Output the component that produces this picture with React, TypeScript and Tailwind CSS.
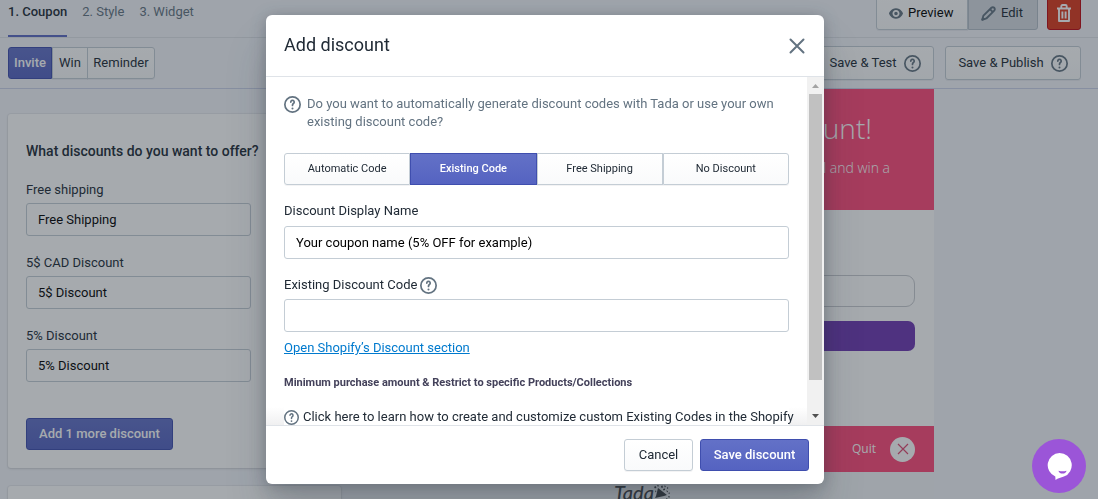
import React from "react";

function HelpIcon({ className = "size-[17px]" }: { className?: string }) {
  return (
    <svg viewBox="0 0 20 20" fill="none" stroke="currentColor" className={`shrink-0 text-[#637381] ${className}`} aria-hidden="true">
      <circle cx="10" cy="10" r="9" strokeWidth="2" />
      <path d="M8 7.1a2 2 0 1 1 3.1 1.7C10.400 9.300 10 9.700 10 10.500v.7" strokeWidth="2" strokeLinecap="round" />
      <circle cx="10" cy="14.700" r="1.200" fill="currentColor" stroke="none" />
    </svg>
  );
}

function EyeIcon() {
  return (
    <svg viewBox="2 4 16 12" className="h-[11px] w-[14px] text-[#637381]" fill="currentColor" aria-hidden="true">
      <path d="M17.928 9.628c-.092-.229-2.317-5.628-7.929-5.628s-7.837 5.399-7.929 5.628c-.094.239-.094.505 0 .744.092.229 2.317 5.628 7.929 5.628s7.837-5.399 7.929-5.628c.094-.239.094-.505 0-.744m-7.929 4.372c-2.209 0-4-1.791-4-4s1.791-4 4-4c2.210 0 4 1.791 4 4s-1.790 4-4 4m0-6c-1.104 0-2 .896-2 2s.896 2 2 2c1.105 0 2-.896 2-2s-.895-2-2-2" />
    </svg>
  );
}

function PencilIcon() {
  return (
    <svg viewBox="0 0 16 16" className="size-[15px] text-[#637381]" fill="none" stroke="currentColor" strokeWidth="2" strokeLinejoin="round" aria-hidden="true">
      <path d="M1.300 14.700l1.300-4.500 8.500-8.300a2 2 0 0 1 3 3l-8.400 8.400z" />
      <path d="M9.800 3.600l2.600 2.600" />
      <path d="M1 15l.8-3 2.200 2.200z" fill="currentColor" strokeWidth="1" />
    </svg>
  );
}

function TrashIcon() {
  return (
    <svg viewBox="0 0 14 18" className="h-[18px] w-[14px]" fill="none" stroke="currentColor" strokeWidth="1.900" strokeLinejoin="round" aria-hidden="true">
      <path d="M0 4.500h14M4.300 4.300V2.200Q4.300 1 5.500 1h3q1.200 0 1.200 1.200v2.100M2 4.800v12.200h10V4.800M5.400 7.500v7M8.600 7.500v7" />
    </svg>
  );
}

const raised = "border border-[#c4cdd5] bg-linear-to-b from-white to-[#f9fafb] shadow-[0_1px_0_0_rgba(22,29,37,0.05)]";
const primary = "border border-[#3f4eae] bg-linear-to-b from-[#6371c7] to-[#5563c1] text-white font-medium";
const field = "block w-full h-[33px] rounded-[3px] border border-[#c4cdd5] bg-white px-[11px] text-[13px] text-black outline-none";

function CouponField({ id, label, value }: { id: string; label: string; value: string }) {
  return (
    <div>
      <label htmlFor={id} className="block pb-1 leading-[18px]">{label}</label>
      <input id={id} defaultValue={value} className={field} />
    </div>
  );
}

function TopBar() {
  return (
    <header className="flex h-[38px] items-end justify-between border-b border-[#dfe3e8] pl-2 pr-[17px]">
      <nav className="flex gap-[15px] text-[#637381]">
        <a href="#coupon" className="h-[34px] border-b-2 border-[#5c6ac4] font-medium leading-[18px] text-[#212b36]">1. Coupon</a>
        <a href="#style" className="leading-[18px]">2. Style</a>
        <a href="#widget" className="leading-[18px]">3. Widget</a>
      </nav>
      <div className="mb-[7px] flex h-[30px] items-end">
        <button type="button" className={`flex h-[34px] w-[92px] items-center gap-[5px] rounded-l-[3px] pl-3 text-black ${raised}`}>
          <EyeIcon />Preview
        </button>
        <button type="button" className="flex h-[34px] w-[70px] items-center gap-[5px] rounded-r-[3px] border border-[#b4bfc9] bg-[#d5dbe2] pl-3">
          <PencilIcon />Edit
        </button>
        <button type="button" aria-label="Delete" className="ml-[9px] flex h-[34px] w-[34px] items-center justify-center rounded-[3px] border border-[#bf0711] bg-[#dc3a1d] text-white">
          <TrashIcon />
        </button>
      </div>
    </header>
  );
}

function StepBar() {
  return (
    <div className="flex h-[51px] items-center justify-between border-b border-[#ccd3ea] pl-2 pr-[17px]">
      <div className="flex">
        <button type="button" className={`h-8 w-11 rounded-l-[3px] ${primary}`}>Invite</button>
        <button type="button" className={`h-8 w-9 ${raised}`}>Win</button>
        <button type="button" className={`-ml-px h-8 w-[68px] rounded-r-[3px] ${raised}`}>Reminder</button>
      </div>
      <div className="flex gap-[11px]">
        <button type="button" className={`flex h-[34px] w-[118px] items-center justify-center gap-[7px] rounded-[3px] ${raised}`}>
          Save &amp; Test<HelpIcon />
        </button>
        <button type="button" className={`flex h-[34px] w-[136px] items-center justify-center gap-[7px] rounded-[3px] ${raised}`}>
          Save &amp; Publish<HelpIcon />
        </button>
      </div>
    </div>
  );
}

function PreviewPanel() {
  return (
    <section className="flex min-w-0 flex-1 flex-col bg-[#f4f6f8] font-['Open_Sans',sans-serif] text-white">
      <div className="h-[121px] bg-[#ff4979] pt-[22px] text-right font-light">
        <h2 className="pr-[62px] text-[28px] leading-[34px]">discount!</h2>
        <p className="pr-11 pt-3 text-[14px] leading-[22px]">email and win a</p>
      </div>
      <div className="h-[216px] bg-white px-[19px] pt-[65px]">
        <input aria-label="Email" className="block h-8 w-full rounded-[9px] border border-[#c9cbd0] bg-white px-3 text-black outline-none" />
        <button type="button" aria-label="Play" className="mt-[14px] block h-[30px] w-full rounded-[7px] bg-[#6e38b2]" />
      </div>
      <div className="flex h-[46px] items-center justify-end gap-[14px] bg-[#ff4979] pr-[19px]">
        <span className="text-[12px] font-medium">Quit</span>
        <button type="button" aria-label="Close preview" className="flex size-[25px] items-center justify-center rounded-full bg-white text-[#e04a72]">
          <svg viewBox="0 0 12 12" className="size-3" fill="none" stroke="currentColor" strokeWidth="1.200" aria-hidden="true">
            <path d="M1 1l10 10M11 1L1 11" />
          </svg>
        </button>
      </div>
      <div className="flex items-start justify-center pt-[7px] text-[#3f4346]">
        <span className="font-['Lato',sans-serif] text-[20px] font-medium italic leading-[26px]">Tada</span>
        <svg viewBox="0 0 16 20" className="mt-[6px] h-5 w-4" fill="currentColor" aria-hidden="true">
          <path d="M4 3l9 7-3 1-9 2 1-2z" />
          <path d="M0 2l1.500-1 1 1.500-1.500 1zM3 0l2 .5-1 1.500zM7 1l1.500-.5.5 2-1.500.5zM10 .5l2 .5-1 1.500zM9 4l2-.5v1.500l-1.500.5zM13 2l1.500 1-1.500 1zM12 5.500l2 .5-.5 1.500zM15 7l1 1.500-1.500.5zM14 11l2 .5-1 1.500zM12 13l1.500.5-.5 1.500zM1 5.500l1.500.5-1 1.500z" />
        </svg>
      </div>
    </section>
  );
}

function Segments() {
  const base = "h-8 text-[11px]";
  return (
    <div className="mt-[22px] grid grid-cols-4 pb-[17px]">
      <button type="button" className={`${base} rounded-l-[3px] ${raised}`}>Automatic Code</button>
      <button type="button" className={`${base} ${primary}`}>Existing Code</button>
      <button type="button" className={`${base} ${raised}`}>Free Shipping</button>
      <button type="button" className={`${base} rounded-r-[3px] ${raised}`}>No Discount</button>
    </div>
  );
}

function DiscountDialog() {
  return (
    <div role="dialog" aria-labelledby="dialog-title" className="flex max-h-full w-full max-w-[558px] flex-col overflow-hidden rounded-md bg-white shadow-[0_31px_41px_0_rgba(32,42,53,0.2),0_2px_16px_0_rgba(32,42,54,0.3)]">
      <div className="flex h-[62px] shrink-0 items-center justify-between border-b border-[#dfe3e8] pl-[18px] pr-[19px]">
        <h1 id="dialog-title" className="pb-[2px] text-[18px] leading-6">Add discount</h1>
        <button type="button" aria-label="Close" className="text-[#637381]">
          <svg viewBox="0 0 16 16" className="size-4" fill="none" stroke="currentColor" strokeWidth="2" strokeLinecap="round" aria-hidden="true">
            <path d="M1.500 1.500l13 13M14.500 1.500l-13 13" />
          </svg>
        </button>
      </div>
      <div className="flex min-h-0 flex-1">
        <div className="min-w-0 flex-1 overflow-hidden bg-[linear-gradient(to_top,#f0f0f1,#ffffff_18px)] px-[18px] pt-[18px]">
          <div className="bg-white pb-6">
            <div className="flex gap-[6px] text-[#637381]">
              <HelpIcon className="mt-px size-[17px]" />
              <p className="leading-[18px]">Do you want to automatically generate discount codes with Tada or use your own existing discount code?</p>
            </div>
            <Segments />
            <label htmlFor="display-name" className="block pb-[6px] leading-[18px]">Discount Display Name</label>
            <input id="display-name" defaultValue="Your coupon name (5% OFF for example)" className={field} />
            <div className="flex items-center gap-[3px] pb-[5px] pt-[17px] leading-[18px]">
              <label htmlFor="existing-code">Existing Discount Code</label>
              <HelpIcon />
            </div>
            <input id="existing-code" className={field} />
            <a href="#discounts" className="mt-[7px] block w-fit leading-[18px] text-[#007ace] underline">Open Shopify’s Discount section</a>
            <h3 className="mt-[17px] text-[11px] font-bold leading-[18px] text-[#43415a]">Minimum purchase amount &amp; Restrict to specific Products/Collections</h3>
            <p className="mt-4 flex gap-1 whitespace-nowrap leading-[18px]">
              <HelpIcon className="mt-[2px] size-[15px]" />
              Click here to learn how to create and customize custom Existing Codes in the Shopify
            </p>
          </div>
        </div>
        <div aria-hidden="true" className="flex w-[17px] shrink-0 flex-col items-center bg-[#f1f1f1]">
          <svg viewBox="0 0 17 17" className="size-[17px] shrink-0 text-[#a3a3a3]" fill="currentColor"><path d="M5 11l3.500-4L12 11z" /></svg>
          <div className="w-[13px] grow bg-[#c1c1c1]" />
          <div className="h-[28px] shrink-0" />
          <svg viewBox="0 0 17 17" className="size-[17px] shrink-0 text-[#505050]" fill="currentColor"><path d="M5 6l3.500 4L12 6z" /></svg>
        </div>
      </div>
      <div className="flex h-[59px] shrink-0 items-center justify-end gap-[7px] border-t border-[#dfe3e8] pr-[15px]">
        <button type="button" className={`h-8 w-[69px] rounded-[3px] ${raised}`}>Cancel</button>
        <button type="button" className={`h-8 w-[109px] rounded-[3px] ${primary}`}>Save discount</button>
      </div>
    </div>
  );
}

export default function App() {
  return (
    <div className="h-screen overflow-hidden bg-[#f4f6fb] font-['Roboto',sans-serif] text-[13px] text-[#212b36]">
      <TopBar />
      <StepBar />
      <main className="flex h-full">
        <section className="w-[350px] shrink-0 pl-2 pr-[9px] pt-[25px]">
          <div className="rounded-[3px] bg-white px-[18px] pb-[18px] pt-[27px] shadow-[0_0_0_1px_rgba(63,63,68,0.05),0_1px_3px_0_rgba(63,63,68,0.15)]">
            <h2 className="text-[14px] font-medium leading-5">What discounts do you want to offer?</h2>
            <div className="mt-5 flex w-[225px] flex-col gap-[18px]">
              <CouponField id="free" label="Free shipping" value="Free Shipping" />
              <CouponField id="cad" label="5$ CAD Discount" value="5$ Discount" />
              <CouponField id="percent" label="5% Discount" value="5% Discount" />
            </div>
            <button type="button" className={`mt-9 h-8 w-[147px] rounded-[3px] ${primary}`}>Add 1 more discount</button>
          </div>
          <div className="mt-[18px] h-24 rounded-[3px] bg-white shadow-[0_0_0_1px_rgba(63,63,68,0.05),0_1px_3px_0_rgba(63,63,68,0.15)]" />
        </section>
        <PreviewPanel />
        <aside className="w-[164px] shrink-0" />
      </main>
      <div className="fixed inset-0 flex items-center justify-center bg-[#212b35]/40 py-[15px] pr-2">
        <DiscountDialog />
      </div>
      <button type="button" aria-label="Open chat" className="fixed bottom-[6px] right-[12px] flex size-[54px] items-center justify-center rounded-full bg-[#9b55d8]">
        <svg viewBox="0 0 25 27" className="h-[27px] w-[25px]" aria-hidden="true">
          <path d="M12.500 0a12.200 12.200 0 0 1 4.400 23.600C14 24.600 11 25.300 8.500 27l-.2-3.500A12.200 12.200 0 0 1 12.500 0z" fill="#fff" />
          <path d="M11.500 17.700q4 1.300 8 0-.5 2.800-4 2.800t-4-2.800z" fill="#9b55d8" />
        </svg>
      </button>
    </div>
  );
}
